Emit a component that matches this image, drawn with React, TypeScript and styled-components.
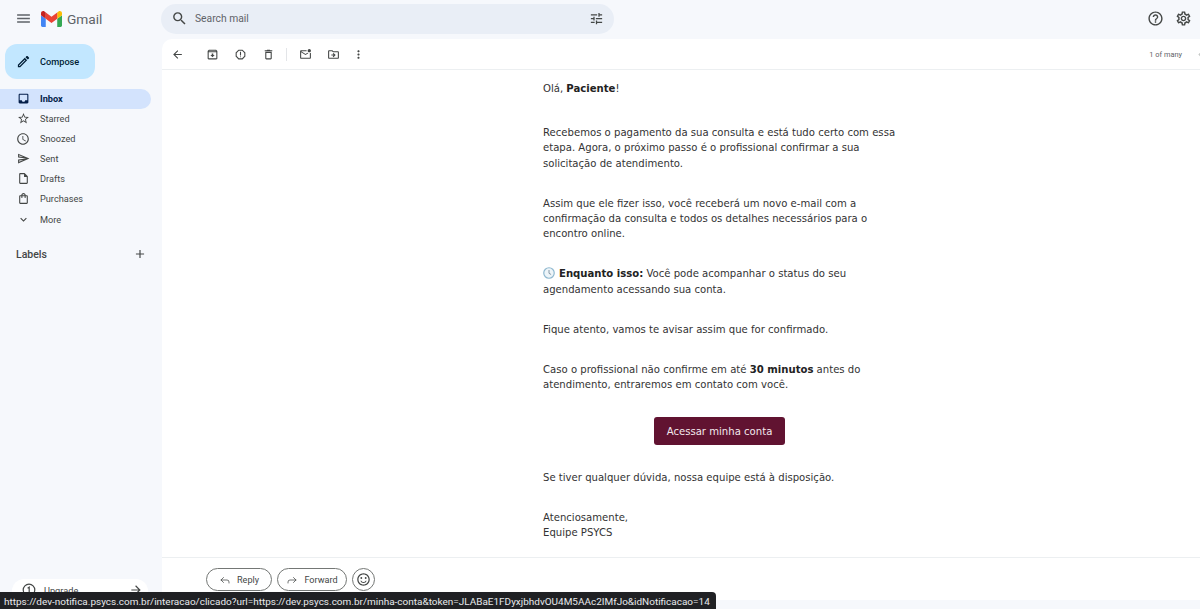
import React from "react";
import styled, { createGlobalStyle } from "styled-components";
import {
  MdMenu, MdSearch, MdTune, MdHelpOutline, MdOutlineSettings, MdOutlineEdit, MdInbox, MdStarBorder,
  MdAccessTime, MdOutlineSend, MdOutlineInsertDriveFile, MdOutlineShoppingBag, MdExpandMore, MdAdd,
  MdArrowBack, MdOutlineArchive, MdOutlineReport, MdOutlineDelete, MdOutlineMarkEmailUnread,
  MdOutlineDriveFileMove, MdMoreVert, MdArrowForward, MdOutlineSentimentSatisfied, MdChevronLeft,
} from "react-icons/md";
import { Reply, Forward } from "lucide-react";

const GlobalStyle = createGlobalStyle`
  html, body { margin: 0; padding: 0; height: 100%; overflow: hidden; }
  body { font-family: Roboto, "Liberation Sans", sans-serif; background: #f6f8fc; color: #444746; }
`;

const Page = styled.div`
  position: relative;
  display: flex;
  flex-direction: column;
  width: 1200px;
  height: 609px;
  overflow: hidden;
  background: #f6f8fc;
`;

const Header = styled.header`
  flex: none;
  display: flex;
  align-items: center;
  height: 39px;
  padding-right: 8px;
  box-sizing: border-box;
`;

const Brand = styled.div`
  flex: none;
  display: flex;
  align-items: center;
  width: 161px;
  padding: 0 0 2px 15px;
  box-sizing: border-box;
  color: #5f6368;
`;

const BrandName = styled.span`
  margin-left: 5px;
  font-size: 13.7px;
  color: #5f6368;
`;

const SearchBar = styled.div`
  display: flex;
  align-items: center;
  width: 453px;
  height: 30px;
  margin-top: -1px;
  padding: 0 10px 1px 10px;
  box-sizing: border-box;
  border-radius: 15px;
  background: #e9eef6;
  color: #444746;
`;

const SearchText = styled.span`
  flex: 1;
  margin-left: 7px;
  font-size: 10.3px;
  color: #5f6368;
`;

const HeaderIcons = styled.div`
  margin-left: auto;
  display: flex;
  align-items: center;
  gap: 11px;
  padding-bottom: 2px;
  color: #444746;
`;

const Body = styled.div`
  flex: 1;
  display: flex;
  min-height: 0;
`;

const Sidebar = styled.aside`
  position: relative;
  flex: none;
  display: flex;
  flex-direction: column;
  width: 162px;
`;

const ComposeButton = styled.button`
  display: flex;
  align-items: center;
  gap: 9px;
  width: 90px;
  height: 35px;
  margin: 5px 0 10px 5px;
  padding: 0 0 0 11px;
  box-sizing: border-box;
  border: 0;
  border-radius: 12px;
  background: #c2e7ff;
  color: #001d35;
  font-family: inherit;
  font-size: 9.2px;
  font-weight: 500;
`;

const NavItem = styled.div<{ $active?: boolean; $top?: number }>`
  display: flex;
  align-items: center;
  width: 151px;
  height: 20px;
  margin-top: ${(p) => p.$top ?? 0}px;
  padding: 0 0 1px 16px;
  box-sizing: border-box;
  border-radius: 0 10px 10px 0;
  font-size: 9.2px;
  font-weight: ${(p) => (p.$active ? 700 : 400)};
  color: ${(p) => (p.$active ? "#041e49" : "#444746")};
  background: ${(p) => (p.$active ? "#d3e3fd" : "transparent")};
`;

const NavIcon = styled.span`
  display: flex;
  justify-content: center;
  width: 14px;
  margin-right: 10px;
`;

const LabelsRow = styled.div`
  display: flex;
  align-items: center;
  justify-content: space-between;
  width: 151px;
  margin-top: 14px;
  padding: 0 4px 0 16px;
  height: 20px;
  box-sizing: border-box;
  font-size: 10.5px;
  font-weight: 500;
  color: #444746;
`;

const UpgradeCard = styled.div`
  position: absolute;
  left: 12px;
  bottom: 0;
  display: flex;
  align-items: center;
  width: 136px;
  height: 30px;
  padding: 0 5px 8px 10px;
  box-sizing: border-box;
  border-radius: 12px;
  background: #ffffff;
  font-size: 9.2px;
  color: #444746;
`;

const UpgradeLabel = styled.span`
  flex: 1;
  margin-left: 8px;
`;

const MailPanel = styled.main`
  flex: 1;
  display: flex;
  flex-direction: column;
  height: 561px;
  border-radius: 10px 0 0 0;
  background: #ffffff;
  overflow: hidden;
`;

const Toolbar = styled.div`
  flex: none;
  display: flex;
  align-items: center;
  height: 31px;
  padding-left: 9px;
  box-sizing: border-box;
  border-bottom: 1px solid #eceff1;
  color: #444746;
`;

const ToolButton = styled.span<{ $gap?: number }>`
  flex: none;
  display: flex;
  align-items: center;
  justify-content: center;
  width: 13px;
  margin-right: ${(p) => p.$gap ?? 15}px;
`;

const ToolDivider = styled.span`
  width: 1px;
  height: 13px;
  margin-right: 12px;
  background: #e3e5e8;
`;

const Pager = styled.span`
  margin-left: auto;
  margin-right: 12px;
  font-size: 7.4px;
  color: #5f6368;
`;

const PagerArrow = styled.span`
  flex: none;
  display: flex;
  width: 13px;
  margin-right: -7px;
  color: #c4c7c5;
`;

const Message = styled.article`
  flex: none;
  height: 488px;
  padding: 11px 0 0 381px;
  box-sizing: border-box;
  border-bottom: 1px solid #eceff1;
  font-family: "DejaVu Sans", Verdana, sans-serif;
  font-size: 10.1px;
  line-height: 15.2px;
  color: #333333;
`;

const Para = styled.p<{ $gap?: number }>`
  width: 355px;
  margin: 0 0 ${(p) => p.$gap ?? 25}px;
`;

const Strong = styled.strong`
  color: #222222;
`;

const ClockEmoji = styled.svg`
  width: 12px;
  height: 12px;
  margin-right: 4px;
  vertical-align: -2px;
`;

const CtaRow = styled.div`
  display: flex;
  justify-content: center;
  width: 353px;
  margin: 25px 0 25px;
`;

const CtaButton = styled.a`
  display: flex;
  align-items: center;
  justify-content: center;
  width: 131px;
  height: 28px;
  border-radius: 3px;
  background: #611331;
  color: #f3e9ed;
  font-size: 10.1px;
`;

const ActionRow = styled.div`
  flex: none;
  display: flex;
  align-items: center;
  gap: 5px;
  padding: 10px 0 0 44px;
`;

const PillButton = styled.button<{ $w: number }>`
  display: flex;
  align-items: center;
  justify-content: center;
  gap: 6px;
  width: ${(p) => p.$w}px;
  height: 23px;
  padding: 0;
  border: 1px solid #747775;
  border-radius: 12px;
  background: #ffffff;
  color: #444746;
  font-family: inherit;
  font-size: 9.1px;
  font-weight: 400;
`;

const EmojiButton = styled.button`
  display: flex;
  align-items: center;
  justify-content: center;
  width: 23px;
  height: 23px;
  padding: 0;
  border: 1px solid #747775;
  border-radius: 50%;
  background: #ffffff;
  color: #444746;
`;

const StatusBar = styled.div`
  position: absolute;
  left: 0;
  bottom: 0;
  width: 716px;
  height: 17px;
  padding-left: 4px;
  box-sizing: border-box;
  border-radius: 0 4px 0 0;
  background: #202124;
  color: #e8eaed;
  font-family: Roboto, "Noto Sans", sans-serif;
  font-size: 9.97px;
  line-height: 19px;
  white-space: nowrap;
  overflow: hidden;
`;

const GmailLogo = () => (
  <svg width="21" height="16" viewBox="52 42 88 66" aria-hidden="true">
    <path fill="#4285f4" d="M58 108h14V74L52 59v43c0 3.32 2.69 6 6 6" />
    <path fill="#34a853" d="M120 108h14c3.32 0 6-2.69 6-6V59l-20 15" />
    <path fill="#fbbc04" d="M120 48v26l20-15v-8c0-7.42-8.47-11.65-14.4-7.2" />
    <path fill="#ea4335" d="M72 74V48l24 18 24-18v26L96 92" />
    <path fill="#c5221f" d="M52 51v8l20 15V48l-5.6-4.2c-5.94-4.45-14.4-.22-14.4 7.2" />
  </svg>
);

const UpgradeIcon = () => (
  <svg width="14" height="14" viewBox="0 0 14 14" fill="none" stroke="#444746" aria-hidden="true">
    <circle cx="7" cy="7" r="5.8" strokeWidth="1.2" />
    <path d="M5.6 5.2 7.2 4.2v5.6" strokeWidth="1.2" />
  </svg>
);

const navItems = [
  { label: "Starred", icon: <MdStarBorder size={13} /> },
  { label: "Snoozed", icon: <MdAccessTime size={14} /> },
  { label: "Sent", icon: <MdOutlineSend size={13} /> },
  { label: "Drafts", icon: <MdOutlineInsertDriveFile size={13} /> },
  { label: "Purchases", icon: <MdOutlineShoppingBag size={13} /> },
  { label: "More", icon: <MdExpandMore size={13} />, top: 1 },
];

export default function App() {
  return (
    <Page>
      <GlobalStyle />
      <Header>
        <Brand>
          <MdMenu size={17} style={{ marginRight: 9 }} />
          <GmailLogo />
          <BrandName>Gmail</BrandName>
        </Brand>
        <SearchBar>
          <MdSearch size={17} />
          <SearchText>Search mail</SearchText>
          <MdTune size={15} />
        </SearchBar>
        <HeaderIcons>
          <MdHelpOutline size={17} />
          <MdOutlineSettings size={17} />
        </HeaderIcons>
      </Header>
      <Body>
        <Sidebar>
          <ComposeButton>
            <MdOutlineEdit size={15} />
            Compose
          </ComposeButton>
          <NavItem $active>
            <NavIcon><MdInbox size={13} /></NavIcon>
            Inbox
          </NavItem>
          {navItems.map((item) => (
            <NavItem key={item.label} $top={item.top}>
              <NavIcon>{item.icon}</NavIcon>
              {item.label}
            </NavItem>
          ))}
          <LabelsRow>
            Labels
            <MdAdd size={14} />
          </LabelsRow>
          <UpgradeCard>
            <UpgradeIcon />
            <UpgradeLabel>Upgrade</UpgradeLabel>
            <MdArrowForward size={14} />
          </UpgradeCard>
        </Sidebar>
        <MailPanel>
          <Toolbar>
            <ToolButton $gap={22}><MdArrowBack size={13} /></ToolButton>
            <ToolButton><MdOutlineArchive size={13} /></ToolButton>
            <ToolButton><MdOutlineReport size={13} /></ToolButton>
            <ToolButton $gap={11}><MdOutlineDelete size={13} /></ToolButton>
            <ToolDivider />
            <ToolButton><MdOutlineMarkEmailUnread size={13} /></ToolButton>
            <ToolButton $gap={12}><MdOutlineDriveFileMove size={13} /></ToolButton>
            <ToolButton><MdMoreVert size={13} /></ToolButton>
            <Pager>1 of many</Pager>
            <PagerArrow><MdChevronLeft size={13} /></PagerArrow>
          </Toolbar>
          <Message>
            <Para $gap={29}>Olá, <Strong>Paciente</Strong>!</Para>
            <Para>
              Recebemos o pagamento da sua consulta e está tudo certo com essa etapa. Agora, o próximo
              passo é o profissional confirmar a sua solicitação de atendimento.
            </Para>
            <Para>
              Assim que ele fizer isso, você receberá um novo e-mail com a confirmação da consulta e
              todos os detalhes necessários para o encontro online.
            </Para>
            <Para>
              <ClockEmoji viewBox="0 0 16 16" aria-hidden="true">
                <circle cx="8" cy="8" r="7" fill="#eef5f9" stroke="#8fb8cf" strokeWidth="1.6" />
                <path d="M8 4v4.4l2.8 1.6" fill="none" stroke="#7a8f9c" strokeWidth="1.2" />
              </ClockEmoji>
              <Strong>Enquanto isso:</Strong> Você pode acompanhar o status do seu agendamento acessando
              sua conta.
            </Para>
            <Para>Fique atento, vamos te avisar assim que for confirmado.</Para>
            <Para $gap={0}>
              Caso o profissional não confirme em até <Strong>30 minutos</Strong> antes do atendimento,
              entraremos em contato com você.
            </Para>
            <CtaRow>
              <CtaButton>Acessar minha conta</CtaButton>
            </CtaRow>
            <Para $gap={24}>Se tiver qualquer dúvida, nossa equipe está à disposição.</Para>
            <Para $gap={0}>
              Atenciosamente,
              <br />
              Equipe PSYCS
            </Para>
          </Message>
          <ActionRow>
            <PillButton $w={66}><Reply size={12} strokeWidth={1.5} />Reply</PillButton>
            <PillButton $w={70}><Forward size={12} strokeWidth={1.5} />Forward</PillButton>
            <EmojiButton><MdOutlineSentimentSatisfied size={15} /></EmojiButton>
          </ActionRow>
        </MailPanel>
      </Body>
      <StatusBar>
        https://dev-notifica.psycs.com.br/interacao/clicado?url=https://dev.psycs.com.br/minha-conta&amp;token=JLABaE1FDyxjbhdvOU4M5AAc2IMfJo&amp;idNotificacao=14
      </StatusBar>
    </Page>
  );
}
